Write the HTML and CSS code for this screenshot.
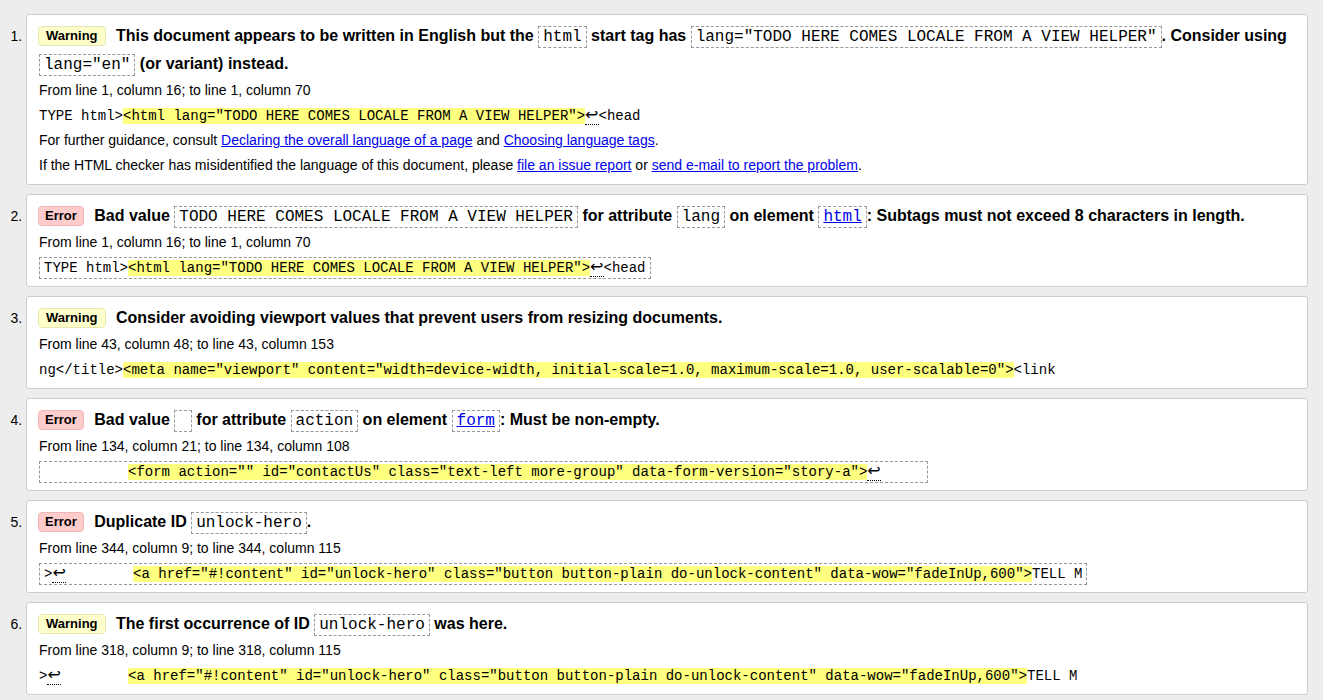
FILE: index.html
```html
<!DOCTYPE html>
<html lang="en">
<head>
<meta charset="utf-8">
<title>Nu Html Checker results</title>
<link rel="stylesheet" href="styles.css">
</head>
<body>
<ol class="messages">
  <li class="msg">
    <p class="title"><span class="badge warning">Warning</span> This document appears to be written in English but the <code>html</code> start tag has <code>lang="TODO HERE COMES LOCALE FROM A VIEW HELPER"</code>. Consider using <code>lang="en"</code> (or variant) instead.</p>
    <p class="location">From line 1, column 16; to line 1, column 70</p>
    <p class="extract"><code class="ex">TYPE html&gt;<b class="hl">&lt;html lang="TODO HERE COMES LOCALE FROM A VIEW HELPER"&gt;</b><span class="lf">↩</span>&lt;head</code></p>
    <p class="info">For further guidance, consult <a href="#">Declaring the overall language of a page</a> and <a href="#">Choosing language tags</a>.</p>
    <p class="info">If the HTML checker has misidentified the language of this document, please <a href="#">file an issue report</a> or <a href="#">send e-mail to report the problem</a>.</p>
  </li>
  <li class="msg">
    <p class="title"><span class="badge error">Error</span> Bad value <code>TODO HERE COMES LOCALE FROM A VIEW HELPER</code> for attribute <code>lang</code> on element <code><a href="#">html</a></code>: Subtags must not exceed 8 characters in length.</p>
    <p class="location">From line 1, column 16; to line 1, column 70</p>
    <p class="extract"><code class="ex boxed">TYPE html&gt;<b class="hl">&lt;html lang="TODO HERE COMES LOCALE FROM A VIEW HELPER"&gt;</b><span class="lf">↩</span>&lt;head</code></p>
  </li>
  <li class="msg">
    <p class="title"><span class="badge warning">Warning</span> Consider avoiding viewport values that prevent users from resizing documents.</p>
    <p class="location">From line 43, column 48; to line 43, column 153</p>
    <p class="extract"><code class="ex">ng&lt;/title&gt;<b class="hl">&lt;meta name="viewport" content="width=device-width, initial-scale=1.0, maximum-scale=1.0, user-scalable=0"&gt;</b>&lt;link</code></p>
  </li>
  <li class="msg">
    <p class="title"><span class="badge error">Error</span> Bad value <code class="empty"> </code> for attribute <code>action</code> on element <code><a href="#">form</a></code>: Must be non-empty.</p>
    <p class="location">From line 134, column 21; to line 134, column 108</p>
    <p class="extract"><code class="ex boxed">          <b class="hl">&lt;form action="" id="contactUs" class="text-left more-group" data-form-version="story-a"&gt;</b><span class="lf">↩</span>     </code></p>
  </li>
  <li class="msg">
    <p class="title"><span class="badge error">Error</span> Duplicate ID <code>unlock-hero</code>.</p>
    <p class="location">From line 344, column 9; to line 344, column 115</p>
    <p class="extract"><code class="ex boxed">&gt;<span class="lf">↩</span>        <b class="hl">&lt;a href="#!content" id="unlock-hero" class="button button-plain do-unlock-content" data-wow="fadeInUp,600"&gt;</b>TELL M</code></p>
  </li>
  <li class="msg">
    <p class="title"><span class="badge warning">Warning</span> The first occurrence of ID <code>unlock-hero</code> was here.</p>
    <p class="location">From line 318, column 9; to line 318, column 115</p>
    <p class="extract"><code class="ex">&gt;<span class="lf">↩</span>        <b class="hl">&lt;a href="#!content" id="unlock-hero" class="button button-plain do-unlock-content" data-wow="fadeInUp,600"&gt;</b>TELL M</code></p>
  </li>
</ol>
</body>
</html>
```

FILE: styles.css
```css
html, body {
  margin: 0;
  padding: 0;
  background: #ededed;
}

body {
  font-family: "Liberation Sans", Arial, Helvetica, sans-serif;
  font-size: 14px;
  color: #000;
}

.messages {
  margin: 0;
  padding: 14px 15px 10px 26px;
  list-style: decimal outside;
}

.msg {
  background: #fff;
  border: 1px solid #cdcdcd;
  border-radius: 3px;
  padding: 7px 12px 6px 12px;
  margin: 0 0 9px 0;
}

.msg p {
  margin: 0;
}

.title {
  font-size: 16px;
  font-weight: bold;
  line-height: 28px;
}

.title code {
  font-family: "Liberation Mono", "Courier New", monospace;
  font-weight: normal;
  font-size: 16px;
  line-height: 18px;
  border: 1px dashed #999;
  padding: 1px 4px;
}

.title code.empty {
  padding: 1px 3px;
  white-space: pre;
}

.title code a {
  color: #00e;
}

.badge {
  display: inline-block;
  font-size: 13px;
  font-weight: bold;
  line-height: 18px;
  padding: 0 6px;
  border-radius: 4px;
  margin-right: 6px;
  margin-left: -1px;
  vertical-align: 1px;
}

.badge.warning {
  background: #ffffcc;
  border: 1px solid #e6e6b3;
  padding: 0 7px;
}

.badge.error {
  background: #ffcccc;
  border: 1px solid #eeb8b8;
}

.location,
.info,
.extract {
  line-height: 25px;
}

.ex {
  font-family: "Liberation Mono", "Courier New", monospace;
  font-size: 14px;
  line-height: 16px;
  white-space: pre;
}

.ex.boxed {
  border: 1px dashed #999;
  padding: 2px 4px;
}

.hl {
  font-weight: normal;
  background: #ffff80;
}

.lf {
  font-family: "DejaVu Sans", sans-serif;
  font-size: 16px;
  line-height: 14px;
  border-bottom: 1px dotted #000;
}

a {
  color: #00e;
  text-decoration: underline;
}
```
